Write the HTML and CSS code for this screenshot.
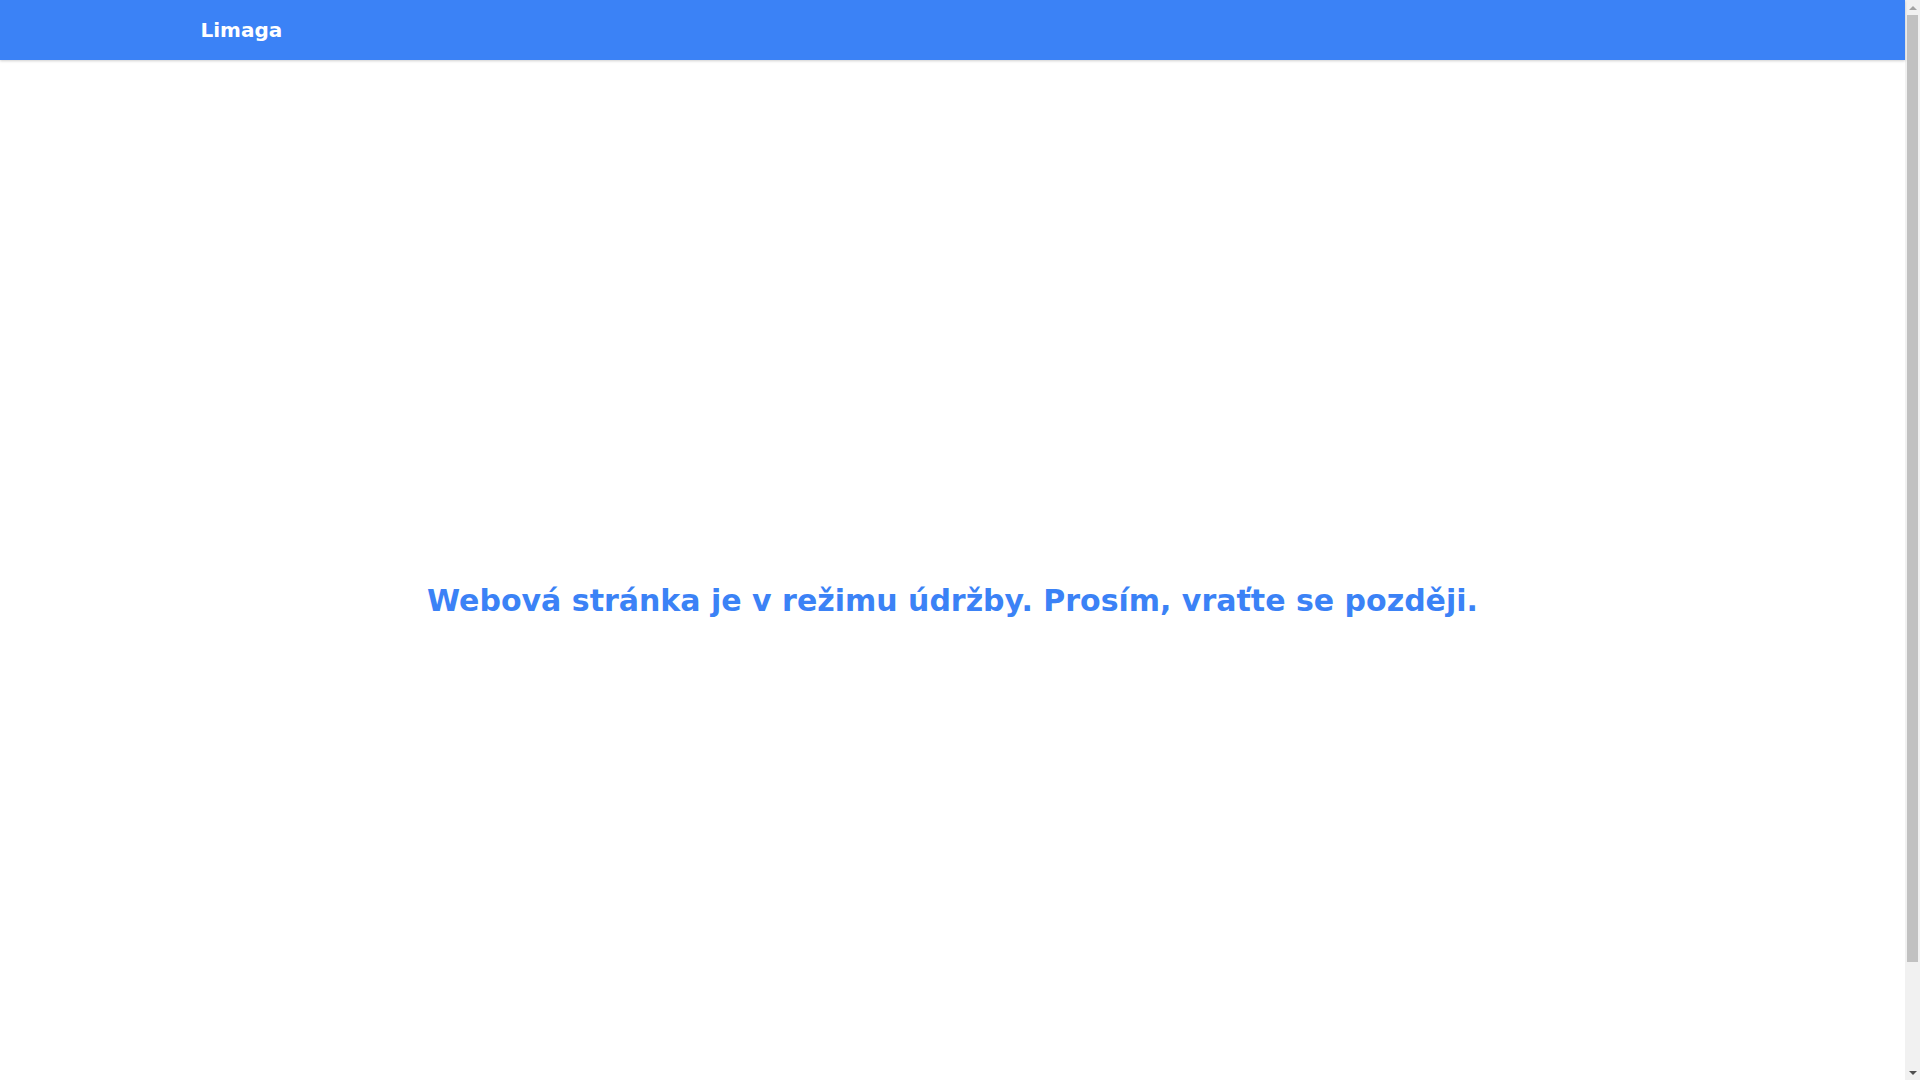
FILE: index.html
```html
<!DOCTYPE html>
<html lang="cs">
<head>
<meta charset="utf-8">
<title>Limaga</title>
<link rel="stylesheet" href="styles.css">
</head>
<body>
<div class="page">
  <header class="topbar">
    <div class="container topbar-inner">
      <span class="brand">Limaga</span>
    </div>
  </header>
  <main class="main">
    <h1 class="notice">Webová stránka je v režimu údržby. Prosím, vraťte se později.</h1>
  </main>
  <footer class="footer"></footer>
</div>
<aside class="scrollbar" aria-hidden="true">
  <div class="sb-btn"><span class="arrow-up"></span></div>
  <div class="sb-track"><div class="sb-thumb"></div></div>
  <div class="sb-btn"><span class="arrow-down"></span></div>
</aside>
</body>
</html>
```
FILE: styles.css
```css
html, body {
  margin: 0;
  padding: 0;
}
html {
  scrollbar-width: none;
}
::-webkit-scrollbar {
  display: none;
}
body {
  font-family: "DejaVu Sans", sans-serif;
  background: #ffffff;
  display: flex;
  align-items: flex-start;
}
.page {
  flex: 1;
  min-width: 0;
}
.container {
  max-width: 1536px;
  margin: 0 auto;
  padding: 0 16px;
  box-sizing: border-box;
}
.topbar {
  background: #3b82f6;
  height: 60px;
  box-shadow: 0 1px 3px rgba(0,0,0,0.12), 0 1px 2px rgba(0,0,0,0.08);
  position: relative;
  z-index: 1;
}
.topbar-inner {
  height: 60px;
  display: flex;
  align-items: center;
}
.brand {
  color: #ffffff;
  font-weight: bold;
  font-size: 20px;
}
.main {
  min-height: 100vh;
  display: flex;
  align-items: center;
  justify-content: center;
}
.notice {
  margin: 0;
  color: #3b82f6;
  font-size: 30px;
  font-weight: bold;
  text-align: center;
}
.footer {
  height: 60px;
}

/* classic scrollbar look */
.scrollbar {
  position: sticky;
  top: 0;
  width: 15px;
  height: 100vh;
  flex: none;
  background: #f1f1f1;
  display: flex;
  flex-direction: column;
}
.sb-btn {
  height: 15px;
  flex: none;
  display: flex;
  align-items: center;
  justify-content: center;
}
.arrow-up {
  width: 0;
  height: 0;
  border-left: 4px solid transparent;
  border-right: 4px solid transparent;
  border-bottom: 4px solid #a3a3a3;
}
.arrow-down {
  width: 0;
  height: 0;
  border-left: 4px solid transparent;
  border-right: 4px solid transparent;
  border-top: 4px solid #505050;
}
.sb-track {
  flex: 1;
  padding: 0 2px;
}
.sb-thumb {
  height: 947px;
  background: #c1c1c1;
}
```
